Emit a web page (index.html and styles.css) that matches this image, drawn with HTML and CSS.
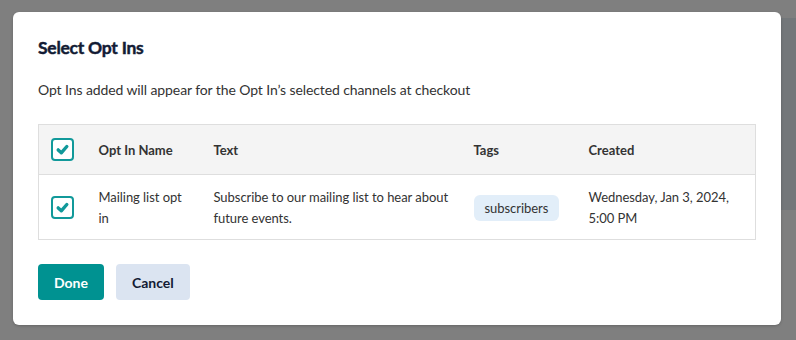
FILE: index.html
```html
<!DOCTYPE html>
<html>
<head>
<meta charset="utf-8">
<link rel="stylesheet" href="styles.css">
</head>
<body>
<div class="behind"></div>
<div class="modal">
  <h2 class="title">Select Opt Ins</h2>
  <p class="subtitle">Opt Ins added will appear for the Opt In’s selected channels at checkout</p>
  <table class="grid">
    <colgroup>
      <col class="c1"><col class="c2"><col class="c3"><col class="c4"><col class="c5">
    </colgroup>
    <thead>
      <tr>
        <th class="cb-cell"><span class="checkbox"><svg viewBox="0 0 19 19" width="19" height="19"><path d="M5.2 9.9 L8.3 12.8 L13.8 6.5" fill="none" stroke="#11999a" stroke-width="3.4" stroke-linecap="round" stroke-linejoin="round"/></svg></span></th>
        <th>Opt In Name</th>
        <th>Text</th>
        <th>Tags</th>
        <th>Created</th>
      </tr>
    </thead>
    <tbody>
      <tr>
        <td class="cb-cell"><span class="checkbox"><svg viewBox="0 0 19 19" width="19" height="19"><path d="M5.2 9.9 L8.3 12.8 L13.8 6.5" fill="none" stroke="#11999a" stroke-width="3.4" stroke-linecap="round" stroke-linejoin="round"/></svg></span></td>
        <td class="name">Mailing list opt in</td>
        <td class="wide"><span class="nowrap">Subscribe to our mailing list to hear about</span> future events.</td>
        <td><span class="tag">subscribers</span></td>
        <td>Wednesday, Jan 3, 2024, 5:00 PM</td>
      </tr>
    </tbody>
  </table>
  <div class="actions">
    <button class="btn btn-primary">Done</button>
    <button class="btn btn-secondary">Cancel</button>
  </div>
</div>
</body>
</html>
```
FILE: styles.css
```css
html, body {
  margin: 0;
  padding: 0;
}
body {
  background: #7f7f7f;
  font-family: Lato, "Open Sans", sans-serif;
  width: 796px;
  height: 340px;
  overflow: hidden;
  position: relative;
  padding-top: 12px;
  box-sizing: border-box;
}
.behind {
  position: absolute;
  right: 0;
  top: 18px;
  width: 60px;
  height: 192px;
  background: #73777a;
}
.modal {
  position: relative;
  margin-left: 13px;
  width: 768px;
  height: 313px;
  box-sizing: border-box;
  background: #fff;
  border-radius: 6px;
  box-shadow: 0 1px 3px rgba(0,0,0,0.2);
  padding: 24px 25px 25px 25px;
}
.title {
  margin: 0;
  font-size: 17.5px;
  line-height: 24px;
  font-weight: 700;
  letter-spacing: -0.25px;
  -webkit-text-stroke: 0.45px #121b34;
  color: #121b34;
}
.subtitle {
  margin: 20px 0 0 0;
  font-size: 14px;
  line-height: 20px;
  letter-spacing: -0.1px;
  color: #333;
}
.grid {
  margin-top: 24px;
  width: 717px;
  border-collapse: collapse;
  table-layout: fixed;
  border: 1px solid #dedede;
  font-size: 13px;
  color: #333;
}
.c1 { width: 49px; }
.c2 { width: 115px; }
.c3 { width: 260px; }
.c4 { width: 115px; }
.c5 { width: 178px; }
.grid th {
  background: #f4f4f4;
  text-align: left;
  font-size: 13px;
  font-weight: 700;
  height: 49px;
  padding: 0 8px 0 11px;
  border-bottom: 1px solid #dedede;
  color: #333;
}
.grid td {
  padding: 12px 8px 10px 11px;
  line-height: 21px;
  letter-spacing: -0.05px;
  vertical-align: middle;
  height: 42px;
}
.grid td.name {
  padding-right: 16px;
}
.grid td.wide {
  padding-right: 0;
}
.nowrap {
  white-space: nowrap;
}
.grid .cb-cell {
  padding: 0 0 0 12px;
}
.checkbox {
  display: flex;
  align-items: center;
  justify-content: center;
  width: 23px;
  height: 23px;
  box-sizing: border-box;
  border: 2px solid #11999a;
  border-radius: 4px;
  background: #fff;
}
.tag {
  display: inline-block;
  background: #e2eef9;
  border-radius: 6px;
  padding: 0 11px;
  line-height: 26px;
  color: #333;
}
.actions {
  display: flex;
  gap: 12px;
  margin-top: 24px;
}
.btn {
  font-family: Lato, "Open Sans", sans-serif;
  font-size: 14px;
  font-weight: 700;
  height: 36px;
  padding: 0 16px;
  border: none;
  border-radius: 4px;
}
.btn-primary {
  background: #009291;
  color: #fff;
}
.btn-secondary {
  background: #dbe4f1;
  color: #121b34;
}
```
